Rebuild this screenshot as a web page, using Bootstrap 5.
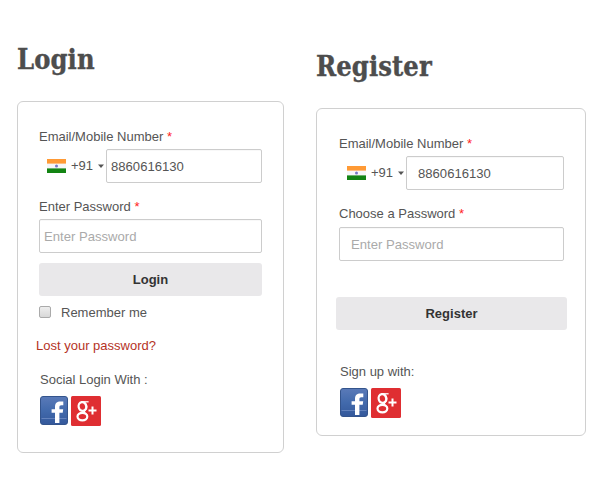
<!DOCTYPE html>
<html lang="en">
<head>
<meta charset="utf-8">
<title>Login / Register</title>
<link href="https://cdn.jsdelivr.net/npm/bootstrap@5.3.0/dist/css/bootstrap.min.css" rel="stylesheet">
<style>
body{font:13px/20px "Liberation Sans",Arial,sans-serif;color:#555;background:#fff;padding:0 14px 0 17px;height:500px;overflow:hidden}
.col-login{width:267px;padding-top:42px}
.col-register{width:270px;padding-top:49px}
.title{font:bold 27px/36px "DejaVu Serif Condensed","DejaVu Serif",serif;font-stretch:condensed;color:#4d4d4d;margin:0 0 23px;white-space:nowrap;letter-spacing:.1px;-webkit-text-stroke:.35px #4d4d4d}
.panel{border:1px solid #d0d0d0;border-radius:6px}
.col-login .panel{height:352px;padding:25px 21px 0}
.col-register .panel{height:328px;padding:25px 21px 0 22px}
.req{color:#f22}
label,.lbl{display:block;font-size:13px;white-space:nowrap}
.form-control{height:34px;font-size:13.1px;line-height:20px;padding:0 4px;border:1px solid #ccc;border-radius:2px;color:#555;box-shadow:inset 0 1px 1px #00000008}
.form-control::placeholder{color:#aaa;opacity:1}
.col-register .form-control{padding-left:11px}
.dial{width:67px;padding-left:8px;font-size:13px;flex:none}
.dial .code{margin-left:5px;width:23px}
.dial .caret{margin-left:4px}
.btn-flat{background:#e9e8ea;color:#333;font-weight:bold;font-size:13px;line-height:20px;height:33px;border:0;border-radius:3px;padding:0;display:block;width:100%}
.btn-flat:hover{background:#ddd}
.check{width:12px;height:12px;border:1px solid #aaa;border-radius:2px;background:linear-gradient(#eee,#d8d8d8);appearance:none;margin:-2px 0 0}
.lost{color:#b5331f;text-decoration:none;margin-left:-3px;font-size:13px}
.social{gap:3px}
</style>
<script src="https://cdn.jsdelivr.net/npm/bootstrap@5.3.0/dist/js/bootstrap.bundle.min.js"></script>
</head>
<body class="d-flex justify-content-between align-items-start">
<svg width="0" height="0" class="position-absolute" aria-hidden="true">
<defs>
<linearGradient id="blue" x1="0" y1="0" x2="0" y2="1"><stop offset="0" stop-color="#5a7ab8"/><stop offset=".5" stop-color="#426aac"/><stop offset="1" stop-color="#34589b"/></linearGradient>
<symbol id="flag" viewBox="0 0 19 14"><rect width="19" height="14" fill="#f6f6f8"/><rect width="19" height="4.6" fill="#ff9a35"/><rect y="9.4" width="19" height="4.6" fill="#138413"/><circle cx="9.5" cy="7" r="1.5" fill="#7777c4"/></symbol>
<symbol id="fb" viewBox="0 0 28 29"><rect x=".5" y=".5" width="27" height="28" rx="2.5" fill="url(#blue)" stroke="#34548c"/><path d="M1.5 22.5h25" stroke="#6e8dc4" stroke-width=".8"/><path d="M15 27V16.8h-3.4v-3.6H15V11c0-4 2-5.6 5.4-5.6h2.9v3.8h-2c-1.5 0-1.9.7-1.9 2v2h3.8l-.5 3.6h-3.3V27z" fill="#fff"/></symbol>
<symbol id="gplus" viewBox="0 0 30 30"><rect width="30" height="30" rx="1.5" fill="#df2e32"/><g fill="none" stroke="#fff"><ellipse cx="11.4" cy="10.5" rx="3.8" ry="4.4" stroke-width="2.2" transform="rotate(-10 11.4 10.5)"/><path d="M11 5.8h6.6" stroke-width="1.3"/><path d="M13.6 6.8c2.6 2 2.8 5.2.7 7.1-1.3 1.1-1.7 1.8-.1 3" stroke-width="1.6"/><ellipse cx="11.4" cy="20.6" rx="4.9" ry="3.8" stroke-width="2.2"/><path d="M17.5 14.5h8M21.5 10.5v8" stroke-width="2"/></g></symbol>
</defs></svg>

<section class="col-login">
<h1 class="title">Login</h1>
<form class="panel">
<label for="m1">Email/Mobile Number <span class="req">*</span></label>
<div class="d-flex" style="margin-top:2px">
<div class="dial d-flex align-items-center"><svg width="19" height="14"><use href="#flag"/></svg><span class="code">+91</span><svg class="caret" width="6" height="4"><path d="M0 .5h6L3 4z" fill="#555"/></svg></div>
<input id="m1" class="form-control" value="8860616130">
</div>
<label for="p1" style="margin-top:14px">Enter Password <span class="req">*</span></label>
<input id="p1" type="password" class="form-control" placeholder="Enter Password" style="margin-top:2px">
<button type="button" class="btn-flat" style="margin-top:10px">Login</button>
<div class="d-flex align-items-center" style="margin-top:7px;gap:10px"><input type="checkbox" class="check" id="r"><label for="r">Remember me</label></div>
<a href="#" class="lost d-block" style="margin-top:13px">Lost your password?</a>
<div class="lbl" style="margin:14px 0 0 1px">Social Login With :</div>
<div class="social d-flex" style="margin:6px 0 0 1px"><svg width="28" height="29"><use href="#fb"/></svg><svg width="30" height="30"><use href="#gplus"/></svg></div>
</form>
</section>

<section class="col-register">
<h1 class="title">Register</h1>
<form class="panel">
<label for="m2">Email/Mobile Number <span class="req">*</span></label>
<div class="d-flex" style="margin-top:2px">
<div class="dial d-flex align-items-center"><svg width="19" height="14"><use href="#flag"/></svg><span class="code">+91</span><svg class="caret" width="6" height="4"><path d="M0 .5h6L3 4z" fill="#555"/></svg></div>
<input id="m2" class="form-control" value="8860616130">
</div>
<label for="p2" style="margin-top:14px">Choose a Password <span class="req">*</span></label>
<input id="p2" type="password" class="form-control" placeholder="Enter Password" style="margin-top:3px">
<div style="margin:36px -3px 0"><button type="button" class="btn-flat">Register</button></div>
<div class="lbl" style="margin:32px 0 0 1px">Sign up with:</div>
<div class="social d-flex" style="margin:6px 0 0 1px"><svg width="28" height="29"><use href="#fb"/></svg><svg width="30" height="30"><use href="#gplus"/></svg></div>
</form>
</section>
</body>
</html>
